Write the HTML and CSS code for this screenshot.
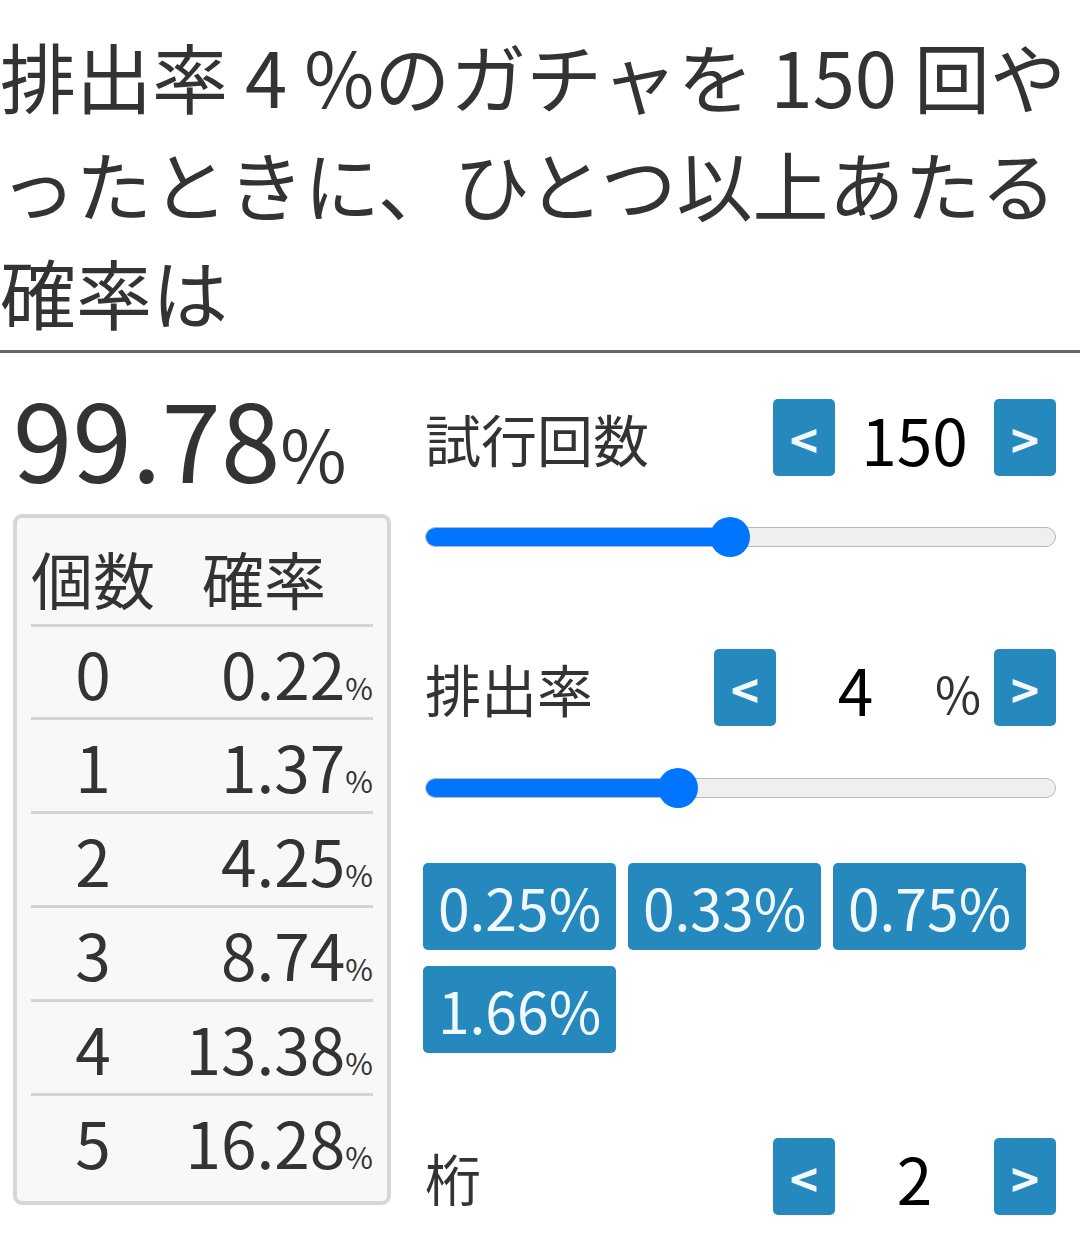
FILE: index.html
```html
<!DOCTYPE html>
<html lang="ja">
<head>
<meta charset="utf-8">
<title>ガチャ確率計算</title>
<link rel="stylesheet" href="styles.css">
</head>
<body>
<h1 class="title">排出率 4 %のガチャを 150 回やったときに、ひとつ以上あたる確率は</h1>
<main class="main">
  <section class="left">
    <div class="result">99.78<span class="result-unit">%</span></div>
    <div class="table-box">
      <table class="dist">
        <thead>
          <tr><th class="c-num">個数</th><th class="c-prob">確率</th></tr>
        </thead>
        <tbody>
          <tr><td class="c-num">0</td><td class="c-prob">0.22<span class="pct">%</span></td></tr>
          <tr><td class="c-num">1</td><td class="c-prob">1.37<span class="pct">%</span></td></tr>
          <tr><td class="c-num">2</td><td class="c-prob">4.25<span class="pct">%</span></td></tr>
          <tr><td class="c-num">3</td><td class="c-prob">8.74<span class="pct">%</span></td></tr>
          <tr><td class="c-num">4</td><td class="c-prob">13.38<span class="pct">%</span></td></tr>
          <tr><td class="c-num">5</td><td class="c-prob">16.28<span class="pct">%</span></td></tr>
        </tbody>
      </table>
    </div>
  </section>
  <section class="right">
    <div class="ctrl ctrl-trials">
      <span class="label">試行回数</span>
      <button class="step">&lt;</button>
      <span class="value">150</span>
      <button class="step">&gt;</button>
    </div>
    <div class="slider slider-1">
      <div class="track"><div class="fill" style="width: 305px"></div></div>
      <div class="thumb" style="left: 285px"></div>
    </div>
    <div class="ctrl ctrl-rate">
      <span class="label">排出率</span>
      <button class="step">&lt;</button>
      <span class="value">4</span>
      <span class="unit">%</span>
      <button class="step">&gt;</button>
    </div>
    <div class="slider slider-2">
      <div class="track"><div class="fill" style="width: 253px"></div></div>
      <div class="thumb" style="left: 233px"></div>
    </div>
    <div class="presets">
      <button class="preset">0.25%</button>
      <button class="preset">0.33%</button>
      <button class="preset">0.75%</button>
      <button class="preset">1.66%</button>
    </div>
    <div class="ctrl ctrl-digits">
      <span class="label">桁</span>
      <button class="step">&lt;</button>
      <span class="value">2</span>
      <button class="step">&gt;</button>
    </div>
  </section>
</main>
</body>
</html>
```

FILE: styles.css
```css
* { box-sizing: border-box; }

html, body {
  margin: 0;
  padding: 0;
  background: #ffffff;
}

body {
  width: 1080px;
  font-family: "Noto Sans CJK JP", "Noto Sans", sans-serif;
  color: #333333;
}

.title {
  margin: 0;
  padding: 21px 0 5px 0;
  font-size: 76px;
  font-weight: 400;
  line-height: 108px;
  border-bottom: 3px solid #666666;
}

.main {
  display: grid;
  grid-template-columns: 378px 631px;
  column-gap: 34px;
  padding-left: 13px;
  align-items: start;
}

/* left column */
.result {
  margin-top: 30px;
  font-size: 107px;
  line-height: 107px;
  white-space: nowrap;
}

.result-unit {
  font-size: 72px;
  line-height: 72px;
}

.table-box {
  margin-top: 24px;
  border: 4px solid #d6d6d6;
  border-radius: 9px;
  background: #f8f8f8;
  padding: 14px 14px 14px 14px;
}

.dist {
  width: 100%;
  border-collapse: collapse;
}

.dist th {
  font-weight: 400;
  font-size: 62px;
  line-height: 92px;
  padding: 0;
  text-align: center;
  border-bottom: 3px solid #d3d3d3;
}

.dist td {
  font-size: 64px;
  line-height: 91px;
  padding: 0;
  border-top: 3px solid #d3d3d3;
}

.dist tbody tr:first-child td { border-top: none; line-height: 90px; }

.dist .c-num { width: 124px; text-align: center; }
.dist td.c-prob { text-align: right; }

.pct {
  font-size: 30px;
  line-height: 30px;
}

/* right column */
.right {
  display: flex;
  flex-direction: column;
  padding-top: 46px;
}

.ctrl {
  display: flex;
  align-items: center;
  height: 77px;
}

.label {
  flex: 1;
  font-size: 56px;
  line-height: 1;
  color: #333333;
}

.step {
  width: 62px;
  height: 77px;
  padding: 0;
  border: none;
  border-radius: 5px;
  background: #2589bd;
  color: #f2f8ff;
  font-family: "Noto Sans CJK JP", sans-serif;
  font-size: 48px;
  font-weight: 700;
  line-height: 1;
}

.value {
  width: 159px;
  text-align: center;
  font-size: 64px;
  line-height: 1;
  color: #000000;
}

.unit {
  width: 59px;
  font-size: 50px;
  line-height: 1;
  color: #333333;
  padding-top: 8px;
}

.slider {
  position: relative;
  height: 40px;
  margin-top: 41px;
}

.ctrl-rate { margin-top: 92px; }
.slider-2 { margin-top: 42px; }

.track {
  position: absolute;
  left: 0;
  right: 0;
  top: 10px;
  height: 20px;
  border: 1px solid #b9b9b9;
  border-radius: 10px;
  background: #efefef;
  overflow: hidden;
}

.fill {
  height: 100%;
  background: #0075ff;
}

.thumb {
  position: absolute;
  top: 0;
  width: 40px;
  height: 40px;
  border-radius: 50%;
  background: #0075ff;
}

.presets {
  display: flex;
  flex-wrap: wrap;
  gap: 16px 12px;
  margin-top: 55px;
  margin-left: -2px;
}

.preset {
  width: 193px;
  height: 87px;
  padding: 0;
  border: none;
  border-radius: 5px;
  background: #2589bd;
  color: #f2f8ff;
  font-family: "Noto Sans CJK JP", sans-serif;
  font-size: 57px;
  line-height: 1;
}

.ctrl-digits { margin-top: 85px; }
```
